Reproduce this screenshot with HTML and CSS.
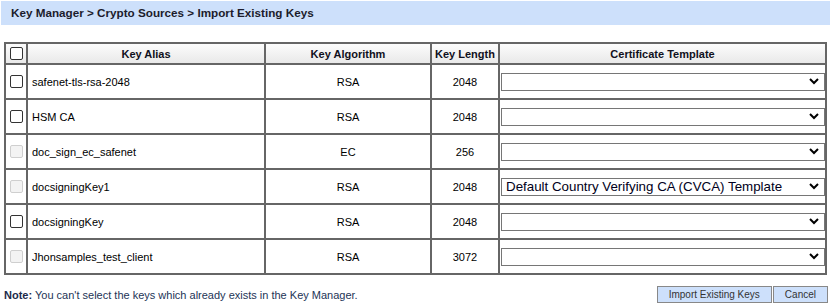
FILE: index.html
```html
<!DOCTYPE html>
<html>
<head>
<meta charset="utf-8">
<title>Import Existing Keys</title>
<link rel="stylesheet" href="styles.css">
</head>
<body>
<div class="titlebar">Key Manager &gt; Crypto Sources &gt; Import Existing Keys</div>

<table class="keys">
  <colgroup>
    <col class="c-check">
    <col class="c-alias">
    <col class="c-algo">
    <col class="c-len">
    <col class="c-tpl">
  </colgroup>
  <tr>
    <th class="check"><input type="checkbox"></th>
    <th>Key Alias</th>
    <th>Key Algorithm</th>
    <th>Key Length</th>
    <th>Certificate Template</th>
  </tr>
  <tr>
    <td class="check"><input type="checkbox"></td>
    <td class="alias">safenet-tls-rsa-2048</td>
    <td class="center">RSA</td>
    <td class="center">2048</td>
    <td class="tpl"><select><option></option></select></td>
  </tr>
  <tr>
    <td class="check"><input type="checkbox"></td>
    <td class="alias">HSM CA</td>
    <td class="center">RSA</td>
    <td class="center">2048</td>
    <td class="tpl"><select><option></option></select></td>
  </tr>
  <tr>
    <td class="check"><input type="checkbox" disabled></td>
    <td class="alias">doc_sign_ec_safenet</td>
    <td class="center">EC</td>
    <td class="center">256</td>
    <td class="tpl"><select><option></option></select></td>
  </tr>
  <tr>
    <td class="check"><input type="checkbox" disabled></td>
    <td class="alias">docsigningKey1</td>
    <td class="center">RSA</td>
    <td class="center">2048</td>
    <td class="tpl"><select><option>Default Country Verifying CA (CVCA) Template</option></select></td>
  </tr>
  <tr>
    <td class="check"><input type="checkbox"></td>
    <td class="alias">docsigningKey</td>
    <td class="center">RSA</td>
    <td class="center">2048</td>
    <td class="tpl"><select><option></option></select></td>
  </tr>
  <tr>
    <td class="check"><input type="checkbox" disabled></td>
    <td class="alias">Jhonsamples_test_client</td>
    <td class="center">RSA</td>
    <td class="center">3072</td>
    <td class="tpl"><select><option></option></select></td>
  </tr>
</table>

<div class="footer">
  <p class="note"><strong>Note:</strong> You can't select the keys which already exists in the Key Manager.</p>
  <div class="buttons">
    <button class="btn">Import Existing Keys</button><button class="btn">Cancel</button>
  </div>
</div>
</body>
</html>
```

FILE: styles.css
```css
body {
	margin: 0;
	font-family: "Liberation Sans", Arial, sans-serif;
	font-size: 11px;
	color: #000;
}
.titlebar {
	margin: 1px 3px 0 1px;
	height: 24px;
	line-height: 24px;
	padding-left: 10px;
	background-color: #cde0fb;
	font-size: 11.7px;
	font-weight: bold;
	color: #1c1c2c;
}
.keys {
	margin: 17px 0 0 4px;
	width: 823px;
	table-layout: fixed;
	border-collapse: collapse;
	border: 2px solid #666;
}
.c-check { width: 22px; }
.c-alias { width: 238px; }
.c-algo { width: 166px; }
.c-len { width: 68px; }
.c-tpl { width: 327px; }
.keys th, .keys td {
	border: 2px solid #666;
	padding: 0;
}
.keys th {
	height: 19px;
	font-weight: bold;
	text-align: center;
	color: #101020;
	background: linear-gradient(#fcfcfc, #e9e9e9);
}
.keys td {
	height: 33px;
}
.keys .check {
	text-align: center;
}
.keys .alias {
	padding-left: 4px;
}
.keys .center {
	text-align: center;
}
.keys .tpl {
	padding: 0 1px 0 1px;
}
input[type="checkbox"] {
	appearance: none;
	-webkit-appearance: none;
	display: block;
	margin: 0 auto;
	width: 13px;
	height: 13px;
	border: 1px solid #333;
	border-radius: 2px;
	background-color: #fff;
}
input[type="checkbox"]:disabled {
	border-color: #cfcfcf;
	background-color: #f3f3f3;
}
select {
	appearance: none;
	-webkit-appearance: none;
	display: block;
	width: 324px;
	height: 18px;
	margin: 0;
	padding: 0 20px 0 4px;
	border: 1px solid #767676;
	border-radius: 0;
	background-color: #fff;
	background-image: url("data:image/svg+xml;utf8,<svg xmlns='http://www.w3.org/2000/svg' width='10' height='7' viewBox='0 0 10 7'><polyline points='1,1 5,5 9,1' fill='none' stroke='black' stroke-width='2'/></svg>");
	background-repeat: no-repeat;
	background-position: right 5px center;
	font-family: "Liberation Sans", Arial, sans-serif;
	font-size: 13.33px;
	color: #000020;
}
.footer {
	display: flex;
	justify-content: space-between;
	align-items: center;
	margin: 11px 5px 0 4px;
}
.note {
	margin: 0;
	color: #233456;
}
.note strong {
	color: #1c2b4b;
}
.buttons {
	display: flex;
	gap: 1px;
}
.btn {
	height: 17px;
	margin: 0;
	padding: 0 11px;
	border: 1px solid #888;
	border-radius: 0;
	background-color: #cde0fb;
	font-family: "Liberation Sans", Arial, sans-serif;
	font-size: 10px;
	color: #333;
}
```
